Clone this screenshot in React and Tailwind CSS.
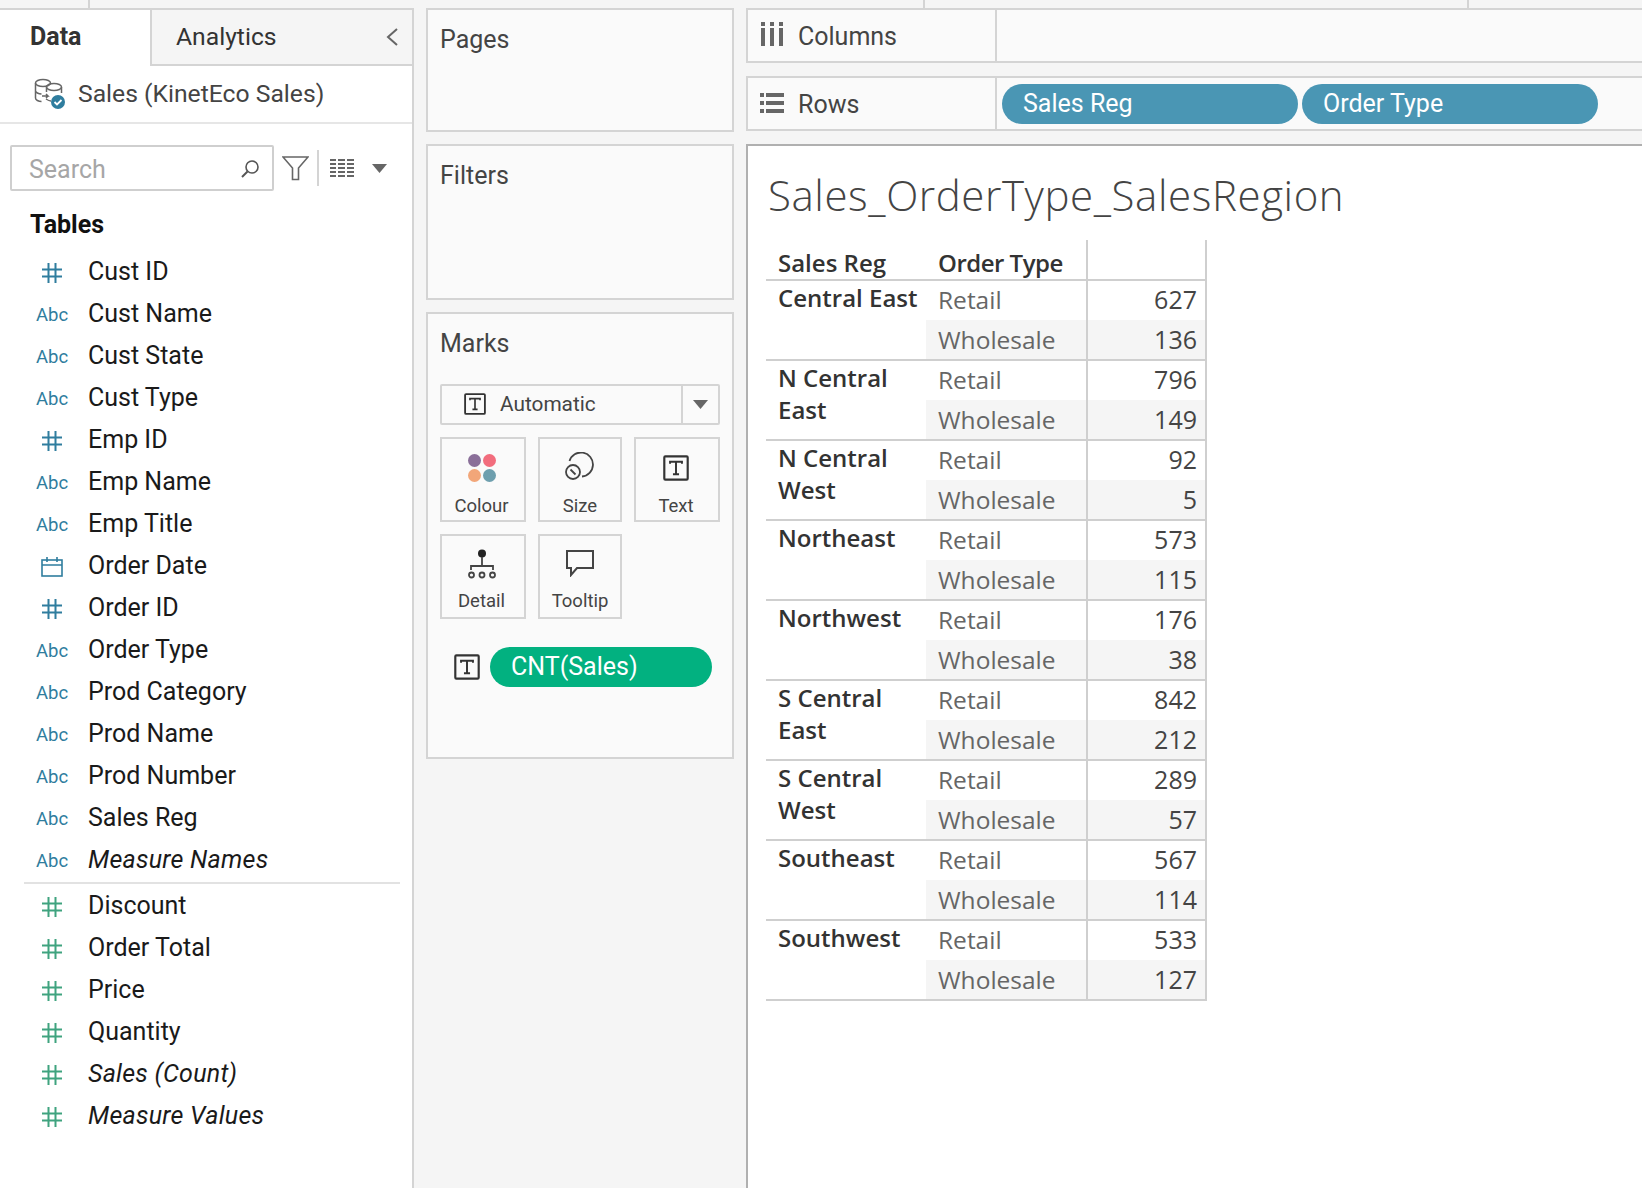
import React from "react";

const dims = ["Cust ID","Cust Name","Cust State","Cust Type","Emp ID","Emp Name","Emp Title","Order Date","Order ID","Order Type","Prod Category","Prod Name","Prod Number","Sales Reg","Measure Names"];
const hashDims = new Set(["Cust ID","Emp ID","Order ID"]);
const measures = ["Discount","Order Total","Price","Quantity","Sales (Count)","Measure Values"];
const italics = new Set(["Measure Names","Sales (Count)","Measure Values"]);
const table = [
  [["Central East"],627,136],[["N Central","East"],796,149],[["N Central","West"],92,5],
  [["Northeast"],573,115],[["Northwest"],176,38],[["S Central","East"],842,212],
  [["S Central","West"],289,57],[["Southeast"],567,114],[["Southwest"],533,127],
];

function Hash({ color }) {
  return (
    <svg className="mt-[2px]" width="20" height="20" viewBox="0 0 20 20" fill="none" stroke={color} strokeWidth="2">
      <path d="M6.5 0v20M13.5 0v20M0 6.5h20M0 13.5h20" />
    </svg>
  );
}
function CalIcon() {
  return (
    <svg className="mt-[2px]" width="22" height="20" viewBox="0 0 22 20" fill="none" stroke="#2f7d9e" strokeWidth="1.6">
      <rect x="1" y="3" width="20" height="16" />
      <path d="M1 8h20M6 0v5M16 0v5" />
    </svg>
  );
}
function TIcon({ size = 22 }) {
  return (
    <svg width={size} height={size} viewBox="0 0 24 24" fill="none" stroke="#333" strokeWidth="2">
      <rect x="1.2" y="1.2" width="21.6" height="21.6" rx="1" />
      <path d="M6.5 8V6.2h11V8M12 6.2v11.6M9.2 17.8h5.6" strokeWidth="1.8" />
    </svg>
  );
}
function Caret() {
  return (
    <svg width="15" height="9" viewBox="0 0 15 9"><path d="M0 0h15L7.5 9z" fill="#666" /></svg>
  );
}
function DbIcon() {
  return (
    <svg width="34" height="32" viewBox="0 0 34 32" fill="none" stroke="#666" strokeWidth="1.5">
      <ellipse cx="10" cy="5" rx="7.5" ry="3.5" />
      <path d="M2.5 5v15c0 2 3 3.500 6 3.500M2.500 12.500c0 2 3 3.500 6 3.500" />
      <ellipse cx="21" cy="9" rx="7.500" ry="3.500" />
      <path d="M28.500 9v6M13.500 9v5M13 21c3 2 4 2 5 2M9 18h6l-2-2m2 2-2 2" />
      <circle cx="25" cy="24" r="7" fill="#2f7d9e" stroke="none" />
      <path d="M21.500 24l2.500 2.500 4.500-4.500" stroke="#fff" strokeWidth="1.800" />
    </svg>
  );
}

function FieldRow({ name, icon }) {
  return (
    <div className="flex h-[42px] items-center">
      <div className="flex w-[88px] shrink-0 justify-center pl-[16px]">{icon}</div>
      <span className={`text-[25px] text-[#1a1a1a] ${italics.has(name) ? "tracking-[0.25px] italic" : ""}`}>{name}</span>
    </div>
  );
}

function MarkCard({ label, width, icon, iconBox = "h-[50px]", className = "" }) {
  return (
    <div className={`flex h-[85px] flex-col items-center border-2 border-[#d4d4d4] ${width} ${className}`}>
      <div className={`flex items-center pt-[8px] ${iconBox}`}>{icon}</div>
      <span className="mt-[5px] text-[18.5px] leading-[24px] text-[#444]">{label}</span>
    </div>
  );
}

function Shelf({ icon, label, children, className }) {
  return (
    <div className={`flex h-[55px] border-2 border-r-0 border-[#d4d4d4] bg-[#fafafa] ${className}`}>
      <div className="flex w-[249px] shrink-0 items-center border-r-2 border-[#d4d4d4] pl-[12px]">
        <div className="flex w-[38px] items-center">{icon}</div>
        <span className="pt-[3px] text-[25px] text-[#444]">{label}</span>
      </div>
      <div className="flex items-center gap-[4px] pl-[5px]">{children}</div>
    </div>
  );
}

function Pill({ label }) {
  return (
    <div className="flex h-[40px] w-[296px] items-center rounded-[20px] bg-[#4a96b4] pt-[1px] pl-[21px] text-[25px] text-white">{label}</div>
  );
}

export default function App() {
  return (
    <div className="flex h-[1188px] w-[1642px] flex-col overflow-hidden bg-[#f5f5f5] font-['Roboto',sans-serif]">
      <div className="flex h-[8px] shrink-0">
        <div className="w-[90px] border-r-2 border-[#d4d4d4]" />
        <div className="w-[835px] border-r-2 border-[#d4d4d4]" />
        <div className="w-[544px] border-r-2 border-[#d4d4d4]" />
      </div>
      <div className="flex min-h-0 flex-1">
        <aside className="flex w-[414px] shrink-0 flex-col border-t-2 border-r-2 border-[#d4d4d4] bg-white">
          <div className="flex h-[56px] shrink-0 bg-white">
            <div className="flex w-[150px] items-center pb-[2px] pl-[30px] text-[25px] font-bold text-[#333]">Data</div>
            <div className="flex flex-1 items-center justify-between border-b-2 border-l-2 border-[#d4d4d4] bg-[#f5f5f5] pr-[14px] pl-[24px]">
              <span className="text-[24.7px] text-[#333]">Analytics</span>
              <svg width="12" height="20" viewBox="0 0 12 20" fill="none" stroke="#666" strokeWidth="2"><path d="M11 2 2 10l9 8" /></svg>
            </div>
          </div>
          <div className="flex h-[58px] shrink-0 items-center border-b-2 border-[#e6e6e6] pl-[33px]">
            <DbIcon />
            <span className="ml-[11px] text-[24.7px] text-[#444]">Sales (KinetEco Sales)</span>
          </div>
          <div className="mt-[21px] flex items-center pl-[10px]">
            <div className="flex h-[46px] w-[264px] items-center justify-between rounded-[2px] border-2 border-[#cfcfcf] pr-[12px] pl-[17px]">
              <span className="pt-[3px] text-[25px] text-[#a6a6a6]">Search</span>
              <svg width="19" height="19" viewBox="0 0 19 19" fill="none" stroke="#555" strokeWidth="1.600"><circle cx="11" cy="8" r="6" /><path d="M6.500 12.500 1 18" strokeWidth="2" /></svg>
            </div>
            <svg className="ml-[8px]" width="27" height="25" viewBox="0 0 27 25" fill="none" stroke="#666" strokeWidth="1.600"><path d="M1 1h25L16.500 12v11.500h-6V12z" /></svg>
            <div className="ml-[8px] h-[36px] w-[2px] bg-[#d4d4d4]" />
            <svg className="ml-[11px]" width="24" height="19" viewBox="0 0 24 19" fill="#666">
              {[0,4,8,12,16].map((y) => (
                <g key={y}><rect x="0" y={y} width="6" height="2" /><rect x="8" y={y} width="7" height="2" /><rect x="17" y={y} width="7" height="2" /></g>
              ))}
            </svg>
            <div className="ml-[18px] flex"><Caret /></div>
          </div>
          <div className="mt-[19px] pl-[30px] text-[25px] leading-[30px] font-bold text-[#111]">Tables</div>
          <div className="mt-[11px]">
            {dims.map((n) => (
              <FieldRow
                key={n}
                name={n}
                icon={hashDims.has(n) ? <Hash color="#2f7d9e" /> : n === "Order Date" ? <CalIcon /> : <span className="pt-[3px] text-[18.5px] whitespace-nowrap text-[#2f7d9e]">Abc</span>}
              />
            ))}
          </div>
          <div className="mx-[24px] mt-[1px] mb-[1px] h-[2px] w-[376px] bg-[#e2e2e2]" />
          {measures.map((n) => <FieldRow key={n} name={n} icon={<Hash color="#3fa37f" />} />)}
        </aside>

        <div className="ml-[12px] flex w-[308px] shrink-0 flex-col">
          <section className="h-[124px] border-2 border-[#d4d4d4] bg-[#fafafa] pt-[11px] pl-[12px] text-[25px] text-[#444]">Pages</section>
          <section className="mt-[12px] h-[156px] border-2 border-[#d4d4d4] bg-[#fafafa] pt-[11px] pl-[12px] text-[25px] text-[#444]">Filters</section>
          <section className="mt-[12px] flex h-[447px] flex-col border-2 border-[#d4d4d4] bg-[#fafafa] px-[12px]">
            <div className="mt-[15px] text-[25px] leading-[30px] text-[#444]">Marks</div>
            <div className="mt-[25px] flex h-[41px] w-[280px] rounded-[2px] border-2 border-[#d4d4d4]">
              <div className="flex flex-1 items-center border-r-2 border-[#d4d4d4] pb-[2px] pl-[22px]">
                <TIcon />
                <span className="ml-[14px] pt-[2px] text-[20.8px] text-[#444]">Automatic</span>
              </div>
              <div className="flex w-[35px] items-center justify-center"><Caret /></div>
            </div>
            <div className="mt-[12px] flex gap-[12px]">
              <MarkCard label="Colour" width="w-[86px]" className="pr-[3px]" icon={
                <div className="grid grid-cols-2 gap-[2px]">
                  <span className="h-[13px] w-[13px] rounded-full bg-[#8a6f99]" />
                  <span className="h-[13px] w-[13px] rounded-full bg-[#f26d7d]" />
                  <span className="h-[13px] w-[13px] rounded-full bg-[#f2a679]" />
                  <span className="h-[13px] w-[13px] rounded-full bg-[#6e9fae]" />
                </div>
              } />
              <MarkCard label="Size" width="w-[84px]" icon={
                <svg className="mb-[3px]" width="30" height="30" viewBox="0 0 30 30" fill="none" stroke="#444" strokeWidth="1.800">
                  <path d="M4.500 9A12 12 0 1 1 17 24.500" />
                  <circle cx="8" cy="20" r="7" />
                  <path d="M5.500 17.500l5 5" />
                </svg>
              } />
              <MarkCard label="Text" width="w-[86px]" className="pr-[2px]" icon={<TIcon size={26} />} />
            </div>
            <div className="mt-[12px] flex gap-[12px]">
              <MarkCard label="Detail" width="w-[86px]" iconBox="h-[48px]" className="pr-[3px]" icon={
                <svg width="28" height="30" viewBox="0 0 28 30" fill="none" stroke="#444" strokeWidth="1.800">
                  <circle cx="14" cy="4.500" r="4" fill="#222" stroke="none" />
                  <path d="M14 8v9M3 21v-4h22v4" />
                  <circle cx="3.500" cy="26" r="2.500" /><circle cx="14" cy="26" r="2.500" /><circle cx="24.500" cy="26" r="2.500" />
                </svg>
              } />
              <MarkCard label="Tooltip" width="w-[84px]" iconBox="h-[48px]" icon={
                <svg className="mb-[2px]" width="30" height="28" viewBox="0 0 30 28" fill="none" stroke="#444" strokeWidth="2">
                  <path d="M2 2h26v17H12l-6 7v-7H2z" />
                </svg>
              } />
            </div>
            <div className="mt-[28px] flex items-center pl-[14px]">
              <TIcon size={26} />
              <div className="ml-[10px] flex h-[40px] w-[222px] items-center rounded-[20px] bg-[#02b180] pl-[21px] text-[25px] text-white">CNT(Sales)</div>
            </div>
          </section>
        </div>

        <div className="ml-[12px] flex min-w-0 flex-1 flex-col">
          <Shelf label="Columns" icon={
            <svg className="mb-[3px] ml-[1px]" width="22" height="24" viewBox="0 0 22 24" fill="#666">
              <rect x="0" y="0" width="4" height="4" /><rect x="9" y="0" width="4" height="4" /><rect x="18" y="0" width="4" height="4" />
              <rect x="0" y="6" width="4" height="18" /><rect x="9" y="6" width="4" height="18" /><rect x="18" y="6" width="4" height="18" />
            </svg>
          } />
          <Shelf label="Rows" className="mt-[13px]" icon={
            <svg className="mb-[2px]" width="24" height="20" viewBox="0 0 24 20" fill="#666">
              <rect x="0" y="0" width="4" height="4" /><rect x="0" y="8" width="4" height="4" /><rect x="0" y="16" width="4" height="4" />
              <rect x="6" y="0" width="18" height="4" /><rect x="6" y="8" width="18" height="4" /><rect x="6" y="16" width="18" height="4" />
            </svg>
          }>
            <Pill label="Sales Reg" />
            <Pill label="Order Type" />
          </Shelf>
          <main className="mt-[13px] flex-1 border-t-2 border-l-2 border-[#b0b0b0] bg-white font-['Open_Sans',sans-serif]">
            <h1 className="mt-[24px] ml-[20px] text-[42px] leading-[50px] font-light tracking-[0.6px] text-[#444]">Sales_OrderType_SalesRegion</h1>
            <div className="mt-[20px] ml-[18px] w-[441px]">
              <div className="flex h-[41px] border-b-2 border-[#cfcfcf]">
                <div className="w-[160px] pt-[5px] pl-[12px] text-[24px] font-semibold text-[#333]">Sales Reg</div>
                <div className="w-[160px] pt-[5px] pl-[12px] text-[24px] font-semibold tracking-[-0.5px] text-[#333]">Order Type</div>
                <div className="w-[121px] border-x-2 border-[#cfcfcf]" />
              </div>
              {table.map((g) => (
                <div key={g[0].join(" ")} className="flex h-[80px] border-b-2 border-[#cfcfcf]">
                  <div className="w-[160px] pt-[1px] pl-[12px] text-[24px] leading-[32px] font-semibold text-[#333]">
                    {g[0].map((l) => <div key={l}>{l}</div>)}
                  </div>
                  <div className="w-[281px] shrink-0">
                    <div className="flex h-[39px]">
                      <div className="flex w-[160px] items-center pl-[12px] text-[24.5px] text-[#666]">Retail</div>
                      <div className="flex w-[121px] items-center justify-end border-x-2 border-[#cfcfcf] pr-[8px] pb-[1px] text-[25px] text-[#444]">{g[1]}</div>
                    </div>
                    <div className="flex h-[39px] bg-[#f5f5f5]">
                      <div className="flex w-[160px] items-center pt-[2px] pl-[12px] text-[24.5px] text-[#666]">Wholesale</div>
                      <div className="flex w-[121px] items-center justify-end border-x-2 border-[#cfcfcf] pr-[8px] text-[25px] text-[#444]">{g[2]}</div>
                    </div>
                  </div>
                </div>
              ))}
            </div>
          </main>
        </div>
      </div>
    </div>
  );
}
